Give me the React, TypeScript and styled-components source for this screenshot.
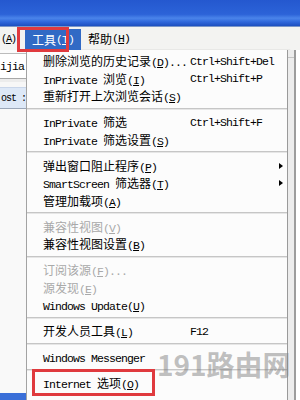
import React from "react";
import styled, { createGlobalStyle, css } from "styled-components";

const GlobalStyle = createGlobalStyle`
  html, body {
    margin: 0;
    padding: 0;
    width: 300px;
    height: 400px;
    overflow: hidden;
    background: #fff;
  }
`;

type Item =
  | { sep: true }
  | {
      sep?: false;
      text: string;
      key?: string;
      after?: string;
      shortcut?: string;
      sub?: boolean;
      disabled?: boolean;
      boxed?: boolean;
    };

const items: Item[] = [
  { text: "删除浏览的历史记录", key: "D", after: "...", shortcut: "Ctrl+Shift+Del" },
  { text: "InPrivate 浏览", key: "I", shortcut: "Ctrl+Shift+P" },
  { text: "重新打开上次浏览会话", key: "S" },
  { sep: true },
  { text: "InPrivate 筛选", shortcut: "Ctrl+Shift+F" },
  { text: "InPrivate 筛选设置", key: "S" },
  { sep: true },
  { text: "弹出窗口阻止程序", key: "P", sub: true },
  { text: "SmartScreen 筛选器", key: "T", sub: true },
  { text: "管理加载项", key: "A" },
  { sep: true },
  { text: "兼容性视图", key: "V", disabled: true },
  { text: "兼容性视图设置", key: "B" },
  { sep: true },
  { text: "订阅该源", key: "F", after: "...", disabled: true },
  { text: "源发现", key: "E", disabled: true },
  { text: "Windows Update", key: "U" },
  { sep: true },
  { text: "开发人员工具", key: "L", shortcut: "F12" },
  { sep: true },
  { text: "Windows Messenger" },
  { sep: true },
  { text: "Internet 选项", key: "O", boxed: true },
];

const Lat = styled.span`
  font-family: "Liberation Mono", monospace;
  font-size: 11.5px;
  letter-spacing: -0.9px;
  white-space: pre;
`;

const Narrow = styled(Lat)`
  font-size: 10.5px;
  letter-spacing: -1.4px;
`;

const Han = styled.span`
  font-family: "Noto Sans CJK SC", sans-serif;
  font-size: 12px;
`;

const Label = ({ text, k, after }: { text: string; k?: string; after?: string }) => {
  const runs = text.match(/[\u3000-\u9fff]+|[^\u3000-\u9fff]+/g) || [];
  return (
    <>
      {runs.map((r, i) =>
        /[\u3000-\u9fff]/.test(r) ? <Han key={i}>{r}</Han> : <Lat key={i}>{r}</Lat>
      )}
      {k && (
        <Lat>
          (<u>{k}</u>){after}
        </Lat>
      )}
    </>
  );
};

const Frame = styled.div`
  position: relative;
  width: 300px;
  height: 400px;
  display: grid;
  grid-template-rows: 27px 23px 1fr;
  overflow: hidden;
  color: #000;
`;

const TitleBar = styled.div`
  background: linear-gradient(
    #2458cf 0%,
    #2c63d8 55%,
    #4a84ea 70%,
    #2e66da 85%,
    #1d4fbf 100%
  );
  border-bottom: 1px solid #7a96c8;
`;

const MenuBar = styled.div`
  display: flex;
  align-items: stretch;
  background: #f3f3f1;
`;

const MenuTitle = styled.div<{ $active?: boolean; $first?: boolean }>`
  position: relative;
  display: flex;
  align-items: center;
  padding: ${(p) => (p.$first ? "0 0 0 1px" : "0 7px")};
  width: ${(p) => (p.$first ? "24px" : "auto")};
  white-space: nowrap;
  ${(p) =>
    p.$active &&
    css`
      background: #316ac5;
      color: #fff;
      margin: 2px 0 0;
      &::after {
        content: "";
        position: absolute;
        left: -8px;
        top: -2px;
        width: 46px;
        height: 19px;
        border: 3px solid #e03a3e;
      }
    `}
`;

const Body = styled.div`
  display: flex;
  min-height: 0;
`;

const LeftPane = styled.div`
  width: 26px;
  display: flex;
  flex-direction: column;
  background: #f7f7f7;
  overflow: hidden;
`;

const TopStrip = styled.div`
  height: 3px;
  border-bottom: 1px solid #bcbcbc;
  background: #fbfbfb;
`;

const AddrRow = styled.div`
  height: 24px;
  display: flex;
  align-items: center;
  background: #fff;
  border-bottom: 1px solid #a8a8a8;
  box-shadow: 0 3px 0 #ececec;
`;

const TabRow = styled.div`
  margin-top: 8px;
  height: 20px;
  display: flex;
  align-items: center;
  padding-left: 1px;
  background: #dde8f7;
  border-top: 1px solid #c9d6ea;
  border-bottom: 1px solid #9aa6b8;
`;

const TabText = styled.span`
  font-family: "Liberation Mono", monospace;
  font-size: 10px;
  letter-spacing: -1px;
  white-space: pre;
`;

const Filler = styled.div`
  flex: 1;
  background: #f9f9f9;
`;

const TaskStrip = styled.div`
  height: 7px;
  background: #3a6fd8;
`;

const MenuPanel = styled.div`
  width: 262px;
  padding-top: 2px;
  background: #fcfcfc;
  border-left: 1px solid #a3a3a3;
  border-right: 1px solid #9a9a9a;
  box-shadow: 2px 0 1px rgba(0, 0, 0, 0.25);
  box-sizing: border-box;
  display: flex;
  flex-direction: column;
`;

const Row = styled.div<{ $disabled?: boolean; $boxed?: boolean }>`
  position: relative;
  height: 17.5px;
  flex: none;
  display: grid;
  grid-template-columns: 147px 1fr 12px;
  align-items: center;
  padding: 0 4px 0 16px;
  white-space: nowrap;
  color: ${(p) => (p.$disabled ? "#a9a9a9" : "#000")};
  ${(p) =>
    p.$boxed &&
    css`
      &::before {
        content: "";
        position: absolute;
        left: 5px;
        top: -5px;
        width: 117px;
        height: 21px;
        border: 3px solid #e03a3e;
      }
    `}
`;

const Shortcut = styled.span`
  font-family: "Liberation Mono", monospace;
  font-size: 11.5px;
  letter-spacing: -0.9px;
`;

const Arrow = styled.span`
  justify-self: end;
  width: 0;
  height: 0;
  border-top: 3.5px solid transparent;
  border-bottom: 3.5px solid transparent;
  border-left: 4px solid #000;
`;

const Separator = styled.div`
  flex: none;
  height: 8.5px;
  display: flex;
  align-items: center;
  &::before {
    content: "";
    flex: 1;
    height: 0;
    border-top: 1px solid #c6c6c6;
    border-bottom: 1px solid #e6e6e6;
  }
`;

const RightPane = styled.div`
  flex: 1;
  background: #ececec;
  border-right: 2px solid #9c9c9c;
  margin-right: 4px;
  display: flex;
  flex-direction: column;
`;

const RightLine = styled.div`
  height: 7px;
  border-bottom: 1px solid #c4c4c4;
`;

const Watermark = styled.div`
  position: absolute;
  left: 157px;
  top: 348px;
  font-family: "Noto Sans CJK SC", sans-serif;
  font-weight: 700;
  font-size: 28px;
  line-height: 32px;
  color: rgba(130, 130, 130, 0.5);
  pointer-events: none;
`;

export default function App() {
  return (
    <>
      <GlobalStyle />
      <Frame>
        <TitleBar />
        <MenuBar>
          <MenuTitle $first>
            <Narrow>
              (<u>A</u>)
            </Narrow>
          </MenuTitle>
          <MenuTitle $active>
            <Label text="工具" k="T" />
          </MenuTitle>
          <MenuTitle>
            <Label text="帮助" k="H" />
          </MenuTitle>
        </MenuBar>
        <Body>
          <LeftPane>
            <TopStrip />
            <AddrRow>
              <Lat>ijia</Lat>
            </AddrRow>
            <TabRow>
              <TabText>ost :</TabText>
            </TabRow>
            <Filler />
            <TaskStrip />
          </LeftPane>
          <MenuPanel>
            {items.map((it, i) =>
              it.sep ? (
                <Separator key={i} />
              ) : (
                <Row key={i} $disabled={it.disabled} $boxed={it.boxed}>
                  <span>
                    <Label text={it.text} k={it.key} after={it.after} />
                  </span>
                  <Shortcut>{it.shortcut}</Shortcut>
                  {it.sub ? <Arrow /> : <span />}
                </Row>
              )
            )}
          </MenuPanel>
          <RightPane>
            <RightLine />
          </RightPane>
        </Body>
        <Watermark>191路由网</Watermark>
      </Frame>
    </>
  );
}
